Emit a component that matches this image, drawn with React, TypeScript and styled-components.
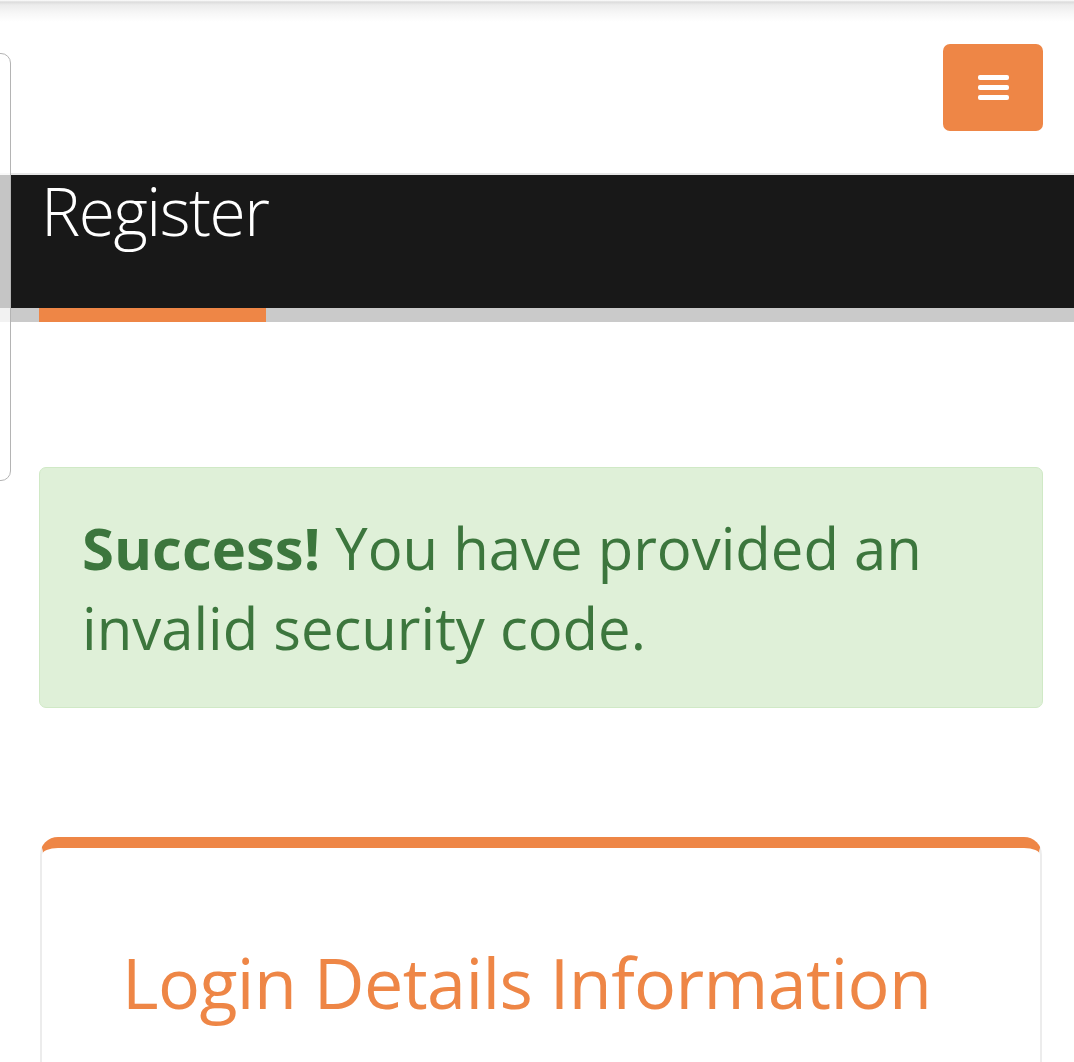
import styled, { createGlobalStyle } from 'styled-components';

const GlobalStyle = createGlobalStyle`
    html, body {
        margin: 0;
        padding: 0;
        background: #ffffff;
        font-family: "Open Sans", "Noto Sans", "Liberation Sans", sans-serif;
    }
    * {
        box-sizing: border-box;
    }
`;

const accent = '#ee8646';

const Page = styled.div`
    position: relative;
    width: 1074px;
    height: 1062px;
    overflow: hidden;
`;

const Navbar = styled.header`
    height: 173px;
    display: flex;
    justify-content: flex-end;
    align-items: flex-start;
    padding: 44px 31px 0 0;
    background: linear-gradient(#ffffff 0, #dcdcdc 2px, #ececec 5px, #f8f8f8 14px, #ffffff 22px);
`;

const MenuButton = styled.button`
    width: 100px;
    height: 87px;
    border: none;
    border-radius: 7px;
    background: ${accent};
    display: flex;
    flex-direction: column;
    align-items: center;
    justify-content: center;
    gap: 5px;
    padding: 0;
    cursor: pointer;
`;

const MenuBar = styled.span`
    display: block;
    width: 31px;
    height: 5px;
    border-radius: 2px;
    background: #ffffff;
`;

const Banner = styled.div`
    height: 135px;
    border-top: 2px solid #e6e6e6;
    background: #181818;
    padding: 2px 0 0 41px;
`;

const PageTitle = styled.h1`
    margin: 0;
    font-size: 66px;
    font-weight: 300;
    line-height: 1;
    color: #ffffff;
    letter-spacing: -1.5px;
`;

const TitleRule = styled.div`
    height: 14px;
    background: #cacaca;
    padding-left: 39px;
`;

const TitleAccent = styled.div`
    width: 227px;
    height: 100%;
    background: ${accent};
`;

const Content = styled.main`
    padding: 145px 31px 0 39px;
    display: flex;
    flex-direction: column;
    gap: 129px;
`;

const Alert = styled.div`
    border: 1px solid #d0e9c6;
    border-radius: 7px;
    background: #dff0d8;
    color: #3c763d;
    padding: 40px 42px 39px;
    font-size: 58px;
    line-height: 80px;
`;

const Strong = styled.strong`
    font-weight: 700;
`;

const Card = styled.section`
    margin: 0 1px;
    height: 400px;
    border-top: 11px solid ${accent};
    border-left: 2px solid #ececec;
    border-right: 2px solid #ececec;
    border-radius: 18px 18px 0 0;
    background: #ffffff;
    padding: 96px 40px 0 80px;
`;

const CardTitle = styled.h2`
    margin: 0;
    font-size: 70px;
    font-weight: 400;
    line-height: 1.1;
    color: ${accent};
    letter-spacing: -0.6px;
`;

const SideDrawer = styled.div`
    position: absolute;
    top: 53px;
    left: -60px;
    width: 71px;
    height: 428px;
    border: 1.5px solid #b4b4b4;
    border-radius: 10px;
    background: rgba(255, 255, 255, 0.75);
`;

export default function App() {
    return <Page>
        <GlobalStyle />
        <Navbar>
            <MenuButton aria-label="Menu">
                <MenuBar />
                <MenuBar />
                <MenuBar />
            </MenuButton>
        </Navbar>
        <Banner>
            <PageTitle>Register</PageTitle>
        </Banner>
        <TitleRule>
            <TitleAccent />
        </TitleRule>
        <Content>
            <Alert>
                <Strong>Success!</Strong> You have provided an invalid security code.
            </Alert>
            <Card>
                <CardTitle>Login Details Information</CardTitle>
            </Card>
        </Content>
        <SideDrawer />
    </Page>;
}
